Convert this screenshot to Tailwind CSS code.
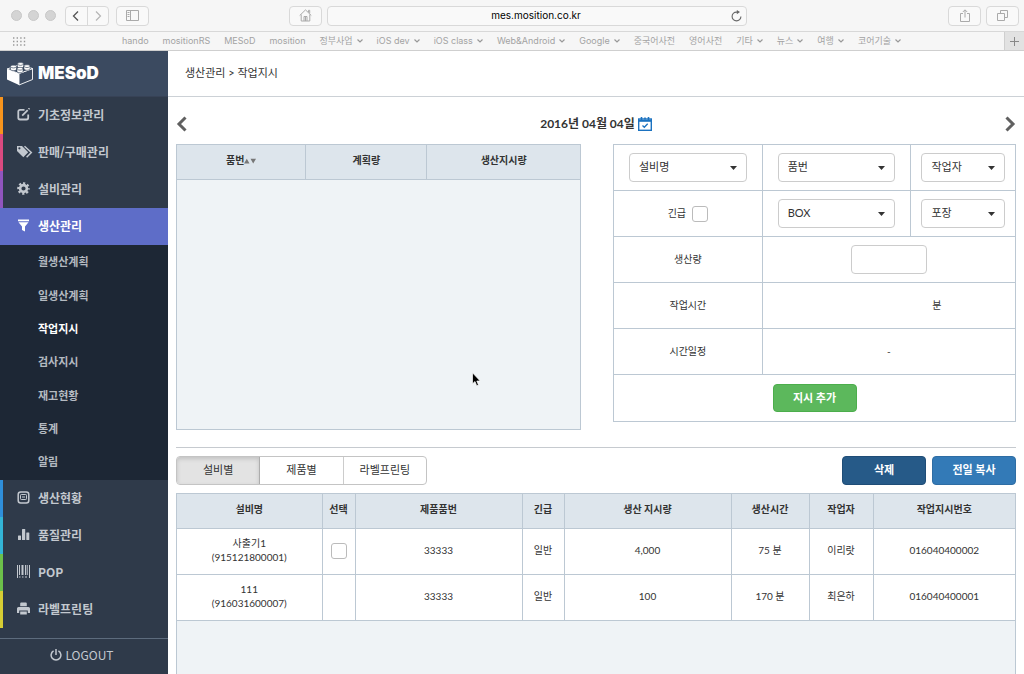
<!DOCTYPE html>
<html lang="ko">
<head>
<meta charset="utf-8">
<title>MESoD</title>
<script src="https://cdn.jsdelivr.net/npm/@tailwindcss/browser@4"></script>
</head>
<body class="h-screen flex flex-col overflow-hidden bg-white text-[#333] text-[10px] font-['Lato','Noto_Sans_CJK_KR',sans-serif]">

<!-- Browser toolbar -->
<div class="shrink-0 bg-[#f6f6f6] font-['Inter','Noto_Sans_CJK_KR',sans-serif]">
  <div class="h-8 flex items-center px-[5px] border-b border-[#d8d8d8]">
    <div class="flex gap-[6px] pl-[6px] w-[60px]">
      <span class="size-[11px] rounded-full bg-[#d4d4d4] border border-[#c8c8c8]"></span>
      <span class="size-[11px] rounded-full bg-[#d4d4d4] border border-[#c8c8c8]"></span>
      <span class="size-[11px] rounded-full bg-[#d4d4d4] border border-[#c8c8c8]"></span>
    </div>
    <div class="flex w-[44px] h-5 rounded border border-[#d9d9d9] bg-[#f9f9f9]">
      <button aria-label="뒤로" class="flex-1 grid place-items-center border-r border-[#d9d9d9]"><svg class="size-3" viewBox="0 0 12 12" fill="none" stroke="#555" stroke-width="1.3"><path d="M8 1.5 3.5 6 8 10.500"/></svg></button>
      <button aria-label="앞으로" class="flex-1 grid place-items-center"><svg class="size-3" viewBox="0 0 12 12" fill="none" stroke="#b5b5b5" stroke-width="1.2"><path d="M4 1.5 8.500 6 4 10.500"/></svg></button>
    </div>
    <button aria-label="사이드바" class="ml-[7px] w-[33px] h-5 rounded border border-[#d9d9d9] bg-[#f9f9f9] grid place-items-center"><svg class="w-[13px] h-[11px]" viewBox="0 0 13 11" fill="none" stroke="#aaa"><path d="M.5.5h12v10H.5zM4.500.5v10M1.500 2.500h2M1.500 4.500h2M1.500 6.500h2"/></svg></button>
    <div class="flex-[140]"></div>
    <button aria-label="홈" class="w-[33px] h-5 rounded border border-[#d9d9d9] bg-[#f9f9f9] grid place-items-center"><svg class="size-[13px]" viewBox="0 0 13 13" fill="none" stroke="#aaa"><path d="M.7 6.500 6.500.9l5.800 5.600M2.200 5.500v6.500h8.600V5.500M9.500 3.200V1.300h1.200v3M5 12V7.500h3V12M6.500 8v4"/></svg></button>
    <div class="ml-[5px] w-[420px] h-5 rounded border border-[#d9d9d9] bg-[#f9f9f9] flex items-center">
      <input aria-label="주소" value="mes.mosition.co.kr" class="flex-1 min-w-0 pl-[18px] text-center text-[10px] text-black bg-transparent outline-none">
      <button aria-label="새로고침" class="w-5 grid place-items-center"><svg class="w-[11px] h-3" viewBox="0 0 11 12"><path d="M9.900 6.500A4.400 4.400 0 1 1 5.500 2.100h1.500" fill="none" stroke="#666" stroke-width="1.100"/><path d="M5.800 0 9 2.100 5.800 4.300z" fill="#666"/></svg></button>
    </div>
    <div class="flex-[201]"></div>
    <button aria-label="공유" class="w-[33px] h-5 rounded border border-[#d9d9d9] bg-[#f9f9f9] grid place-items-center"><svg class="w-[10px] h-[13px]" viewBox="0 0 10 13" fill="none" stroke="#aaa"><path d="M3 4.500H.5v8h9v-8H7M5 8.500V1M2.800 3 5 .8 7.200 3"/></svg></button>
    <button aria-label="탭 보기" class="ml-[5px] w-[33px] h-5 rounded border border-[#d9d9d9] bg-[#f9f9f9] grid place-items-center"><svg class="size-[11px]" viewBox="0 0 11 11" fill="none" stroke="#aaa"><path d="M.5 3.500h7v7h-7zM3.500 3V.5h7v7H8"/></svg></button>
  </div>
  <div class="h-[19px] flex items-center border-b border-[#cfcfcf] text-[9px] text-[#a3a3a3]">
    <svg class="ml-[13px] w-[13px] h-[9px] shrink-0" viewBox="0 0 13 9" fill="none" stroke="#999" stroke-width="1.400" stroke-dasharray="1.400 2.200"><path d="M0 1h13M0 4.500h13M0 8h13"/></svg>
    <nav class="flex-1 flex justify-center gap-[14px] pr-[7px] whitespace-nowrap">
      <a href="#">hando</a><a href="#">mositionRS</a><a href="#">MESoD</a><a href="#">mosition</a>
      <a href="#" class="flex items-center gap-1">정부사업<svg class="w-[6px] h-1" viewBox="0 0 6 4" fill="none" stroke="#999" stroke-width="1.200"><path d="m.5.500 2.500 2.500L5.500.5"/></svg></a>
      <a href="#" class="flex items-center gap-1">iOS dev<svg class="w-[6px] h-1" viewBox="0 0 6 4" fill="none" stroke="#999" stroke-width="1.200"><path d="m.5.500 2.500 2.500L5.500.5"/></svg></a>
      <a href="#" class="flex items-center gap-1">iOS class<svg class="w-[6px] h-1" viewBox="0 0 6 4" fill="none" stroke="#999" stroke-width="1.200"><path d="m.5.500 2.500 2.500L5.500.5"/></svg></a>
      <a href="#" class="flex items-center gap-1">Web&amp;Android<svg class="w-[6px] h-1" viewBox="0 0 6 4" fill="none" stroke="#999" stroke-width="1.200"><path d="m.5.500 2.500 2.500L5.500.5"/></svg></a>
      <a href="#" class="flex items-center gap-1">Google<svg class="w-[6px] h-1" viewBox="0 0 6 4" fill="none" stroke="#999" stroke-width="1.200"><path d="m.5.500 2.500 2.500L5.500.5"/></svg></a>
      <a href="#">중국어사전</a><a href="#">영어사전</a>
      <a href="#" class="flex items-center gap-1">기타<svg class="w-[6px] h-1" viewBox="0 0 6 4" fill="none" stroke="#999" stroke-width="1.200"><path d="m.5.500 2.500 2.500L5.500.5"/></svg></a>
      <a href="#" class="flex items-center gap-1">뉴스<svg class="w-[6px] h-1" viewBox="0 0 6 4" fill="none" stroke="#999" stroke-width="1.200"><path d="m.5.500 2.500 2.500L5.500.5"/></svg></a>
      <a href="#" class="flex items-center gap-1">여행<svg class="w-[6px] h-1" viewBox="0 0 6 4" fill="none" stroke="#999" stroke-width="1.200"><path d="m.5.500 2.500 2.500L5.500.5"/></svg></a>
      <a href="#" class="flex items-center gap-1">코어기술<svg class="w-[6px] h-1" viewBox="0 0 6 4" fill="none" stroke="#999" stroke-width="1.200"><path d="m.5.500 2.500 2.500L5.500.5"/></svg></a>
    </nav>
    <button aria-label="새 탭" class="w-5 h-full bg-[#e2e2e2] border-l border-[#cfcfcf] grid place-items-center"><svg class="size-[9px]" viewBox="0 0 9 9" stroke="#888"><path d="M4.500 0v9M0 4.500h9"/></svg></button>
  </div>
</div>

<div class="flex-1 min-h-0 flex">
  <!-- Sidebar -->
  <aside class="w-[168px] shrink-0 flex flex-col bg-[#2f3a4a] text-[#c3c8cf] font-['Noto_Sans_CJK_KR',sans-serif]">
    <a href="#" class="h-[46px] shrink-0 flex items-center gap-1 pl-[6px] bg-[#3b4a60] border-b border-[#374256] text-white">
      <svg class="w-7 h-6" viewBox="0 0 28 24">
        <path d="M1 7 13 11.500V23L1 17.500z" fill="#fff"/>
        <path d="M13 11.500 26.500 6.500v11L13 23z" fill="#3b4a60" stroke="#fff" stroke-width=".9"/>
        <path d="M1 7 14.500 2.500l12 4L13 11.500z" fill="#3b4a60" stroke="#fff" stroke-width=".9"/>
        <g fill="#fff" stroke="#3b4a60" stroke-width=".6">
          <path d="M11.500 2v2.600c0 1.900 6 1.900 6 0V2c0-1.900-6-1.900-6 0z"/>
          <path d="M4.500 4.600v2.600c0 1.900 6 1.900 6 0V4.600c0-1.900-6-1.900-6 0z"/>
          <path d="M18 4.200v2.600c0 1.900 6 1.900 6 0V4.200c0-1.900-6-1.900-6 0z"/>
          <path d="M11 6.800v2.600c0 1.900 6 1.900 6 0V6.800c0-1.900-6-1.900-6 0z"/>
        </g>
        <g fill="none" stroke="#3b4a60" stroke-width=".7">
          <path d="M11.800 2.300c.8 1.400 4.600 1.400 5.400 0M4.800 4.900c.8 1.400 4.600 1.400 5.400 0M18.300 4.500c.8 1.400 4.600 1.400 5.400 0M11.300 7.100c.8 1.400 4.600 1.400 5.400 0"/>
        </g>
      </svg>
      <span class="font-['Inter',sans-serif] font-black text-[17px] leading-none">MESoD</span>
    </a>
    <nav class="flex flex-col text-[12px] font-bold">
      <a href="#" class="h-[37px] pb-[2px] flex items-center gap-2 pl-[14px] border-l-[3px] border-[#f7941d]">
        <svg class="size-[13px]" viewBox="0 0 13 13" fill="none" stroke="currentColor" stroke-width="1.800"><path d="M7.500 1.800H3A1.700 1.700 0 0 0 1.300 3.500v6.300A1.700 1.700 0 0 0 3 11.500h6.500a1.700 1.700 0 0 0 1.700-1.700V6.500"/><path d="m5.200 7.600 5.500-5.500"/><path d="m11.600 1.200.9-.9"/></svg>기초정보관리</a>
      <a href="#" class="h-[37px] pb-[2px] flex items-center gap-[5px] pl-[14px] border-l-[3px] border-[#da4a80]">
        <svg class="w-4 h-[13px]" viewBox="0 0 16 13"><path d="M0 1h5l6.200 6.200-4.900 5L0 6z" fill="currentColor"/><circle cx="2.400" cy="3.300" r="1.100" fill="#2f3a4a"/><path d="M7.500 1.300 14.300 7.500 9.600 12.300" fill="none" stroke="currentColor" stroke-width="1.500"/></svg>판매/구매관리</a>
      <a href="#" class="h-[37px] pb-[2px] flex items-center gap-2 pl-[14px] border-l-[3px] border-[#9055be]">
        <svg class="size-[13px]" viewBox="0 0 13 13" fill="none" stroke="currentColor"><circle cx="6.500" cy="6.500" r="3.400" stroke-width="2.600"/><circle cx="6.500" cy="6.500" r="5.200" stroke-width="2.200" stroke-dasharray="2.200 1.884" stroke-dashoffset="1.100"/></svg>설비관리</a>
      <a href="#" class="h-[37px] pb-[2px] flex items-center gap-2 pl-[14px] border-l-[3px] border-[#5e6dc8] bg-[#5e6dc8] text-white">
        <svg class="size-[13px]" viewBox="0 0 13 13"><path d="M1 .5h11v1.800H1zM1.500 3.200h10L8 7.500v5L5 11V7.500z" fill="currentColor"/></svg>생산관리</a>
      <div class="h-[235px] pb-[2px] flex flex-col bg-[#1d2735] pl-[38px] text-[11px] text-[#b4bac1]">
        <a href="#" class="flex-1 flex items-center">월생산계획</a>
        <a href="#" class="flex-1 flex items-center">일생산계획</a>
        <a href="#" class="flex-1 flex items-center text-white">작업지시</a>
        <a href="#" class="flex-1 flex items-center">검사지시</a>
        <a href="#" class="flex-1 flex items-center">재고현황</a>
        <a href="#" class="flex-1 flex items-center">통계</a>
        <a href="#" class="flex-1 flex items-center">알림</a>
      </div>
      <a href="#" class="h-[37px] pb-[2px] flex items-center gap-2 pl-[14px] border-l-[3px] border-[#2f8fdb]">
        <svg class="size-[13px]" viewBox="0 0 13 13" fill="none" stroke="currentColor"><rect x="1.200" y="1" width="10.600" height="11" rx="2.500" stroke-width="1.500"/><rect x="3.500" y="3.500" width="6" height="5" rx=".8"/><path d="M5 6h3"/></svg>생산현황</a>
      <a href="#" class="h-[37px] pb-[2px] flex items-center gap-2 pl-[14px] border-l-[3px] border-[#33b4d6]">
        <svg class="size-[13px]" viewBox="0 0 13 13" fill="currentColor"><rect x="1" y="7.500" width="3" height="4.500" rx=".5"/><rect x="5" y="1" width="3.200" height="11" rx=".5"/><rect x="9.300" y="4.500" width="3" height="7.500" rx=".5"/></svg>품질관리</a>
      <a href="#" class="h-[37px] pb-[2px] flex items-center gap-2 pl-[14px] border-l-[3px] border-[#6cc04a]">
        <svg class="size-[13px]" viewBox="0 0 13 13" fill="currentColor"><path d="M0 0h1v13H0zM2 0h1v10H2zM4.500 0h2v10h-2zM8 0h1v10H8zM9.700 0h1v10h-1zM12 0h1v13h-1zM2 11.500h1.500v1H2zM5 11.500h1.500v1H5zM8 11.500h2v1H8z"/></svg>POP</a>
      <a href="#" class="h-[37px] pb-[2px] flex items-center gap-2 pl-[14px] border-l-[3px] border-[#d6cd34]">
        <svg class="size-[13px]" viewBox="0 0 13 13" fill="currentColor"><path d="M3.200 4.300V1.500q0-1 1-1h4.600q1 0 1 1v2.800zM0 6.500q0-1.500 1.500-1.500h10Q13 5 13 6.500V11h-2.200V8.500H2.200V11H0zM3.200 9.500h6.600v3H3.200z"/></svg>라벨프린팅</a>
    </nav>
    <div class="flex-1"></div>
    <a href="#" class="h-9 shrink-0 flex items-center justify-center gap-[3px] border-t border-[#5d6b7d] text-[12px] pb-1 pr-1">
      <svg class="size-3" viewBox="0 0 12 12" fill="none" stroke="currentColor" stroke-width="1.500"><path d="M3.600 1.900a4.900 4.900 0 1 0 4.800 0M6 0v6"/></svg>LOGOUT</a>
  </aside>

  <!-- Content -->
  <main class="flex-1 min-w-0 flex flex-col">
    <div class="h-[46px] shrink-0 flex items-center pl-[17px] border-b border-[#ccd1d6] text-[11px]">생산관리 &gt; 작업지시</div>

    <div class="flex-1 min-h-0 flex flex-col px-2">
      <div class="h-[47px] pt-[6px] shrink-0 flex items-center justify-between">
        <button aria-label="이전 날짜"><svg class="w-[11px] h-4" viewBox="0 0 11 16" fill="none" stroke="#606060" stroke-width="3"><path d="M9.500 1.500 3 8l6.500 6.500"/></svg></button>
        <button class="flex items-center gap-[3px] text-[12px] font-bold">2016년 04월 04일
          <svg class="size-[14px]" viewBox="0 0 14 14" fill="none" stroke="#1b72c0"><rect x=".7" y="2" width="12.600" height="11.300" stroke-width="1.400"/><path d="M0 3.800h14" stroke-width="2"/><path d="M3.500 0v3.500M7 .5v2M10.500 0v3.500" stroke-width="1.600"/><path d="m4.500 8.500 1.800 1.800 3.400-3.600" stroke-width="1.300"/></svg></button>
        <button aria-label="다음 날짜"><svg class="w-[11px] h-4" viewBox="0 0 11 16" fill="none" stroke="#606060" stroke-width="3"><path d="M1.500 1.500 8 8l-6.500 6.500"/></svg></button>
      </div>

      <div class="shrink-0 flex gap-8 items-start">
        <div class="relative flex-1 h-[286px] border border-[#bcc8d3] bg-[#eff3f6]">
          <table class="w-full table-fixed border-collapse">
            <colgroup><col class="w-[32%]"><col class="w-[30%]"><col></colgroup>
            <thead class="bg-[#dde5ec]"><tr class="h-[34px] border-b border-[#bcc8d3]">
              <th class="border-r border-[#bcc8d3] pb-[2px]"><span class="inline-flex items-center">품번<svg class="w-3 h-[6px]" viewBox="0 0 12 6" fill="#777"><path d="M0 5.500 2.800.8l2.700 4.700zM6.500.8H12L9.200 5.500z"/></svg></span></th>
              <th class="border-r border-[#bcc8d3] pb-[2px]">계획량</th>
              <th class="pb-[2px]">생산지시량</th>
            </tr></thead>
          </table>
          <!-- Mouse pointer -->
          <svg class="absolute left-[295px] top-[227px] w-[9px] h-[15px]" viewBox="0 0 9 15"><path d="M.5.8v11l2.500-2.300L4.700 13.800l1.800-.8-1.700-4h3.400z" fill="#000" stroke="#fff" stroke-width=".7"/></svg>
        </div>

        <form class="flex-1">
          <table class="w-full table-fixed border-collapse text-center">
            <colgroup><col class="w-[37%]"><col class="w-[37%]"><col></colgroup>
            <tbody>
            <tr class="h-[46px]">
              <td class="border border-[#bcc8d3] px-[15px]"><div class="relative"><select aria-label="설비명" class="appearance-none w-full h-[29px] rounded border border-[#ccc] bg-white pl-[9px] pb-px text-[11px]"><option>설비명</option></select><svg class="absolute right-[10px] top-[13px] w-[7px] h-1 pointer-events-none" viewBox="0 0 7 4"><path d="M0 0h7L3.500 4z" fill="#333"/></svg></div></td>
              <td class="border border-[#bcc8d3] px-[15px]"><div class="relative"><select aria-label="품번" class="appearance-none w-full h-[29px] rounded border border-[#ccc] bg-white pl-[9px] pb-px text-[11px]"><option>품번</option></select><svg class="absolute right-[10px] top-[13px] w-[7px] h-1 pointer-events-none" viewBox="0 0 7 4"><path d="M0 0h7L3.500 4z" fill="#333"/></svg></div></td>
              <td class="border border-[#bcc8d3] px-[10px]"><div class="relative"><select aria-label="작업자" class="appearance-none w-full h-[29px] rounded border border-[#ccc] bg-white pl-[9px] pb-px text-[11px]"><option>작업자</option></select><svg class="absolute right-[10px] top-[13px] w-[7px] h-1 pointer-events-none" viewBox="0 0 7 4"><path d="M0 0h7L3.500 4z" fill="#333"/></svg></div></td>
            </tr>
            <tr class="h-[46px]">
              <td class="border border-[#bcc8d3]"><label class="inline-flex items-center gap-[6px] align-middle">긴급<input type="checkbox" class="appearance-none size-4 rounded-[3px] border border-[#bbb] bg-white"></label></td>
              <td class="border border-[#bcc8d3] px-[15px]"><div class="relative"><select aria-label="포장 단위" class="appearance-none w-full h-[29px] rounded border border-[#ccc] bg-white pl-[9px] pb-px text-[11px]"><option>BOX</option></select><svg class="absolute right-[10px] top-[13px] w-[7px] h-1 pointer-events-none" viewBox="0 0 7 4"><path d="M0 0h7L3.500 4z" fill="#333"/></svg></div></td>
              <td class="border border-[#bcc8d3] px-[10px]"><div class="relative"><select aria-label="포장" class="appearance-none w-full h-[29px] rounded border border-[#ccc] bg-white pl-[9px] pb-px text-[11px]"><option>포장</option></select><svg class="absolute right-[10px] top-[13px] w-[7px] h-1 pointer-events-none" viewBox="0 0 7 4"><path d="M0 0h7L3.500 4z" fill="#333"/></svg></div></td>
            </tr>
            <tr class="h-[46px]">
              <td class="border border-[#bcc8d3]"><label for="qty">생산량</label></td>
              <td colspan="2" class="border border-[#bcc8d3]"><input id="qty" type="text" class="block mx-auto w-[76px] h-[29px] rounded border border-[#ccc] bg-white px-2 text-[11px]"></td>
            </tr>
            <tr class="h-[46px]">
              <td class="border border-[#bcc8d3]">작업시간</td>
              <td colspan="2" class="border border-[#bcc8d3] pl-24">분</td>
            </tr>
            <tr class="h-[46px]">
              <td class="border border-[#bcc8d3]">시간일정</td>
              <td colspan="2" class="border border-[#bcc8d3]">-</td>
            </tr>
            <tr class="h-[47px]">
              <td colspan="3" class="border border-[#bcc8d3]"><button type="button" class="block mx-auto w-[84px] h-7 rounded bg-[#5cb85c] border border-[#4cae4c] text-white text-[11px] font-bold">지시 추가</button></td>
            </tr>
            </tbody>
          </table>
        </form>
      </div>

      <div class="mt-[17px] border-t border-[#c6cacf] pt-2 shrink-0 flex justify-between text-[11px]">
        <div class="flex h-[29px] w-[251px] rounded border border-[#c4c4c4] overflow-hidden">
          <button class="flex-1 bg-[#e3e3e3] border-r border-[#adadad] shadow-[inset_0_2px_4px_rgba(0,0,0,0.15)]">설비별</button>
          <button class="flex-1 border-r border-[#ccc]">제품별</button>
          <button class="flex-1">라벨프린팅</button>
        </div>
        <div class="flex gap-[6px] font-bold text-white">
          <button class="w-[84px] h-[29px] rounded bg-[#265a88] border border-[#1f4d77]">삭제</button>
          <button class="w-[84px] h-[29px] rounded bg-[#337ab7] border border-[#2e6da4]">전일 복사</button>
        </div>
      </div>

      <div class="mt-2 flex-1 min-h-0 border-x border-t border-[#bcc8d3] bg-[#eff3f6]">
        <table class="w-full table-fixed border-collapse text-center">
          <colgroup><col class="w-[145px]"><col class="w-[33px]"><col><col class="w-[42px]"><col><col class="w-[78px]"><col class="w-[64px]"><col class="w-[142px]"></colgroup>
          <thead class="bg-[#dde5ec]"><tr class="h-[34px] border-b border-[#bcc8d3] divide-x divide-[#bcc8d3] *:pb-[2px]">
            <th>설비명</th><th>선택</th><th>제품품번</th><th>긴급</th><th>생산 지시량</th><th>생산시간</th><th>작업자</th><th>작업지시번호</th>
          </tr></thead>
          <tbody class="bg-white">
            <tr class="h-[46px] border-b border-[#bcc8d3] divide-x divide-[#bcc8d3]">
              <td class="leading-[14px] pb-[2px]">사출기1<br>(915121800001)</td>
              <td><input type="checkbox" aria-label="사출기1 선택" class="block mx-auto appearance-none size-4 rounded-[3px] border border-[#bbb] bg-white"></td>
              <td class="pb-[2px]">33333</td><td class="pb-[2px]">일반</td><td class="pb-[2px]">4,000</td><td class="pb-[2px]">75 분</td><td class="pb-[2px]">이리랏</td><td class="pb-[2px]">016040400002</td>
            </tr>
            <tr class="h-[46px] border-b border-[#bcc8d3] divide-x divide-[#bcc8d3]">
              <td class="leading-[14px] pb-[2px]">111<br>(916031600007)</td>
              <td></td>
              <td class="pb-[2px]">33333</td><td class="pb-[2px]">일반</td><td class="pb-[2px]">100</td><td class="pb-[2px]">170 분</td><td class="pb-[2px]">최은하</td><td class="pb-[2px]">016040400001</td>
            </tr>
          </tbody>
        </table>
      </div>
    </div>
  </main>
</div>
</body>
</html>
